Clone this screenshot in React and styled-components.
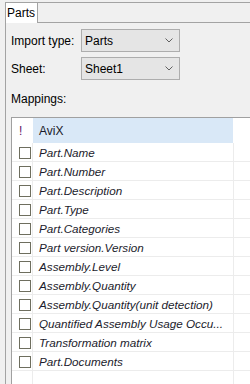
import React from "react";
import styled, { createGlobalStyle } from "styled-components";

const GlobalStyle = createGlobalStyle`
  html, body { margin: 0; padding: 0; background: #f0f0f0; }
  body { font-family: "Liberation Sans", Arial, sans-serif; font-size: 12px; color: #000; }
`;

const Frame = styled.div`
  width: 250px;
  height: 384px;
  overflow: hidden;
  box-sizing: border-box;
  padding: 2px 0 0 5px;
  background: #f0f0f0;
  display: flex;
`;

const TabControl = styled.div`
  flex: 1;
  display: flex;
  flex-direction: column;
  border-left: 1px solid #a3a3a3;
  border-top: 1px solid #a3a3a3;
  min-width: 0;
`;

const TabStrip = styled.div`
  display: flex;
  height: 20px;
  flex-shrink: 0;
`;

const Tab = styled.div`
  width: 30px;
  height: 20px;
  background: #fff;
  border-right: 1px solid #a3a3a3;
  box-sizing: content-box;
  padding-left: 1px;
  line-height: 20px;
  font-size: 12px;
  color: #000;
`;

const StripFiller = styled.div`
  flex: 1;
  height: 20px;
  box-sizing: border-box;
  border-bottom: 1px solid #a3a3a3;
`;

const Panel = styled.div`
  flex: 1;
  display: flex;
  flex-direction: column;
  padding: 6px 0 0 5px;
  min-height: 0;
`;

const FormRow = styled.div`
  display: grid;
  grid-template-columns: 70px 99px;
  align-items: center;
  margin-bottom: ${(p) => p.$gap || 0}px;
`;

const Label = styled.div`
  font-size: 12px;
  color: #000;
`;

const Combo = styled.div`
  height: 23px;
  box-sizing: border-box;
  border: 1px solid #adadad;
  background: #e5e5e5;
  display: flex;
  align-items: center;
  justify-content: space-between;
  padding: 0 6px 0 3px;
  font-size: 12px;
  color: #000;
`;

const SectionLabel = styled.div`
  margin-top: 12px;
  height: 15px;
  line-height: 15px;
  font-size: 12px;
  color: #000;
`;

const Grid = styled.div`
  margin-top: 10px;
  flex: 1;
  background: #fff;
  border-left: 1px solid #a0a0a0;
  border-top: 1px solid #a0a0a0;
  display: grid;
  grid-template-columns: 21px 201px 1fr;
  grid-auto-rows: 19px;
  grid-template-rows: 25px;
  align-content: start;
`;

const HeaderMark = styled.div`
  display: flex;
  align-items: center;
  padding-left: 7px;
  color: #5e1464;
  font-size: 12px;
`;

const HeaderCell = styled.div`
  background: #d9e8f7;
  margin-right: 1px;
  display: flex;
  align-items: center;
  padding-left: 6px;
  color: #1a1a2a;
  font-size: 12px;
`;

const HeaderRest = styled.div``;

const CheckCell = styled.div`
  border-right: 1px solid #ececec;
  border-bottom: 1px solid #ececec;
  display: flex;
  align-items: center;
  padding-left: 7px;
  box-sizing: border-box;
`;

const Box = styled.div`
  width: 12px;
  height: 12px;
  margin-top: 1px;
  box-sizing: border-box;
  border: 1px solid #6e6e5e;
  background: #fff;
`;

const NameCell = styled.div`
  border-right: 1px solid #ececec;
  border-bottom: 1px solid #ececec;
  box-sizing: border-box;
  display: flex;
  align-items: center;
  padding: 1px 0 0 6px;
  font-style: italic;
  font-size: 11.7px;
  color: #1c1c2c;
  white-space: nowrap;
  overflow: hidden;
`;

const RestCell = styled.div`
  border-bottom: 1px solid #ececec;
  box-sizing: border-box;
`;

const Chevron = () => (
  <svg width="8" height="5" viewBox="0 0 8 5">
    <path d="M0.5 0.5 L4 4 L7.5 0.5" fill="none" stroke="#606060" strokeWidth="1" />
  </svg>
);

const items = [
  "Part.Name",
  "Part.Number",
  "Part.Description",
  "Part.Type",
  "Part.Categories",
  "Part version.Version",
  "Assembly.Level",
  "Assembly.Quantity",
  "Assembly.Quantity(unit detection)",
  "Quantified Assembly Usage Occu...",
  "Transformation matrix",
  "Part.Documents",
  "",
];

export default function App() {
  return (
    <>
      <GlobalStyle />
      <Frame>
        <TabControl>
          <TabStrip>
            <Tab>Parts</Tab>
            <StripFiller />
          </TabStrip>
          <Panel>
            <FormRow $gap={5}>
              <Label>Import type:</Label>
              <Combo>
                <span>Parts</span>
                <Chevron />
              </Combo>
            </FormRow>
            <FormRow>
              <Label>Sheet:</Label>
              <Combo>
                <span>Sheet1</span>
                <Chevron />
              </Combo>
            </FormRow>
            <SectionLabel>Mappings:</SectionLabel>
            <Grid>
              <HeaderMark>!</HeaderMark>
              <HeaderCell>AviX</HeaderCell>
              <HeaderRest />
              {items.map((t, i) => (
                <React.Fragment key={i}>
                  <CheckCell>{t && <Box />}</CheckCell>
                  <NameCell>{t}</NameCell>
                  <RestCell />
                </React.Fragment>
              ))}
            </Grid>
          </Panel>
        </TabControl>
      </Frame>
    </>
  );
}
